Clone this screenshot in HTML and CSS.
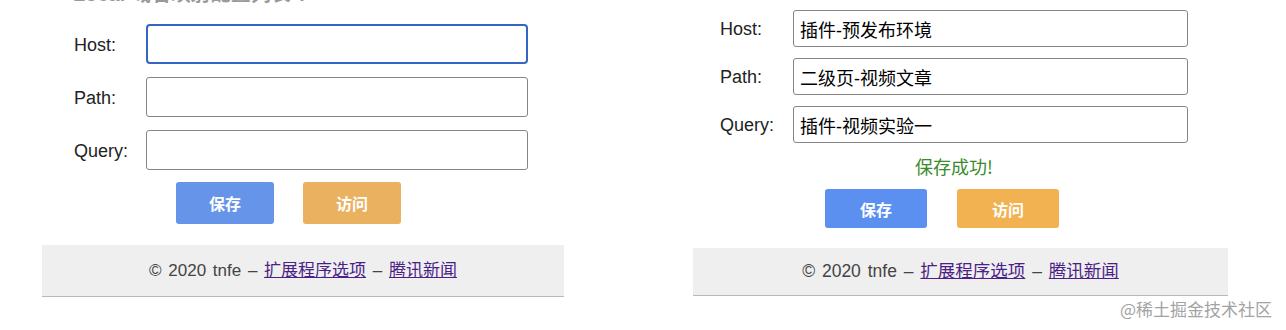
FILE: index.html
```html
<!DOCTYPE html>
<html lang="zh-CN">
<head>
    <meta charset="UTF-8">
    <meta name="viewport" content="width=device-width, initial-scale=1.0">
    <title>扩展程序选项</title>
    <link rel="stylesheet" href="styles.css">
</head>
<body>

<div class="page">
    <div class="panel panel-empty">
        <h3 class="panel-title">Local 域名映射配置列表 ?</h3>
        <form class="options-form">
            <div class="form-row">
                <label for="hostA">Host:</label>
                <input type="text" id="hostA" class="is-focused">
            </div>
            <div class="form-row">
                <label for="pathA">Path:</label>
                <input type="text" id="pathA">
            </div>
            <div class="form-row">
                <label for="queryA">Query:</label>
                <input type="text" id="queryA">
            </div>
            <div class="btn-row">
                <button type="button" class="btn btn-save">保存</button>
                <button type="button" class="btn btn-visit">访问</button>
            </div>
        </form>
        <div class="footer">© 2020 tnfe – <a href="#">扩展程序选项</a> – <a href="#">腾讯新闻</a></div>
    </div>

    <div class="panel panel-filled">
        <form class="options-form">
            <div class="form-row">
                <label for="hostB">Host:</label>
                <input type="text" id="hostB" value="插件-预发布环境">
            </div>
            <div class="form-row">
                <label for="pathB">Path:</label>
                <input type="text" id="pathB" value="二级页-视频文章">
            </div>
            <div class="form-row">
                <label for="queryB">Query:</label>
                <input type="text" id="queryB" value="插件-视频实验一">
            </div>
            <div class="message">保存成功!</div>
            <div class="btn-row">
                <button type="button" class="btn btn-save">保存</button>
                <button type="button" class="btn btn-visit">访问</button>
            </div>
        </form>
        <div class="footer">© 2020 tnfe – <a href="#">扩展程序选项</a> – <a href="#">腾讯新闻</a></div>
    </div>
</div>

<div class="watermark">@稀土掘金技术社区</div>

</body>
</html>
```

FILE: styles.css
```css
body {
    font-family: "Liberation Sans", "Noto Sans CJK SC", sans-serif;
    background-color: #fff;
    color: #222;
    margin: 0;
    padding: 0;
    height: 330px;
    overflow: hidden;
}
.page {
    display: flex;
    align-items: flex-start;
    padding-left: 42px;
    gap: 129px;
}
.panel {
    display: flex;
    flex-direction: column;
}
.panel-empty {
    width: 522px;
}
.panel-filled {
    width: 535px;
    padding-top: 10px;
}
.panel-title {
    margin: -17px 0 0 31px;
    height: 22px;
    line-height: 22px;
    font-size: 20px;
    font-weight: bold;
    color: #999;
    white-space: nowrap;
}
.options-form {
    display: flex;
    flex-direction: column;
}
.form-row {
    display: flex;
    align-items: center;
}
.form-row label {
    font-size: 18px;
    color: #222;
    padding-top: 2px;
}
.form-row input {
    box-sizing: border-box;
    font-family: "Liberation Sans", "Noto Sans CJK SC", sans-serif;
    font-size: 18px;
    color: #000;
    border: 1px solid #858585;
    border-radius: 3px;
    padding: 0 6px;
    outline: none;
}
.form-row input.is-focused {
    border: 2px solid #3366c4;
    border-radius: 4px;
}

/* left: empty form, bigger rows */
.panel-empty .options-form {
    padding: 19px 0 0 32px;
    gap: 13px;
}
.panel-empty .form-row label {
    width: 72px;
}
.panel-empty .form-row input {
    width: 382px;
    height: 40px;
}
.panel-empty .btn-row {
    margin: -1px 0 0 102px;
    gap: 29px;
}
.panel-empty .btn {
    width: 98px;
    height: 42px;
}
.panel-empty .btn-save {
    background-color: #6594e8;
}
.panel-empty .btn-visit {
    background-color: #eab160;
}
.panel-empty .footer {
    margin-top: 21px;
    height: 51px;
    line-height: 51px;
}

/* right: filled form after saving */
.panel-filled .options-form {
    padding-left: 27px;
    gap: 11px;
}
.panel-filled .form-row label {
    width: 73px;
}
.panel-filled .form-row input {
    width: 395px;
    height: 37px;
}
.panel-filled .btn-row {
    margin: 0 0 0 105px;
    gap: 30px;
}
.panel-filled .btn {
    width: 102px;
    height: 39px;
}
.panel-filled .btn-save {
    background-color: #5b8ff0;
}
.panel-filled .btn-visit {
    background-color: #f2b252;
}
.panel-filled .footer {
    margin-top: 20px;
    height: 47px;
    line-height: 47px;
    font-size: 17.5px;
}

.message {
    padding-right: 40px;
    height: 24px;
    text-align: center;
    font-size: 18px;
    line-height: 24px;
    color: #3b8a2c;
    font-family: "Noto Sans CJK SC", sans-serif;
}
.btn-row {
    display: flex;
}
.btn {
    border: none;
    border-radius: 3px;
    color: #fff;
    font-size: 16px;
    font-weight: bold;
    font-family: "Noto Sans CJK SC", sans-serif;
    cursor: pointer;
}
.footer {
    background-color: #efefef;
    border-bottom: 1px solid #b8b8b8;
    text-align: center;
    font-size: 17px;
    word-spacing: 2px;
    color: #444;
}
.footer a {
    color: #4b1f86;
    text-decoration: underline;
}
.watermark {
    position: absolute;
    right: 14px;
    top: 296px;
    font-family: "Noto Sans CJK SC", sans-serif;
    font-size: 17px;
    color: #a3a3a3;
}
```
